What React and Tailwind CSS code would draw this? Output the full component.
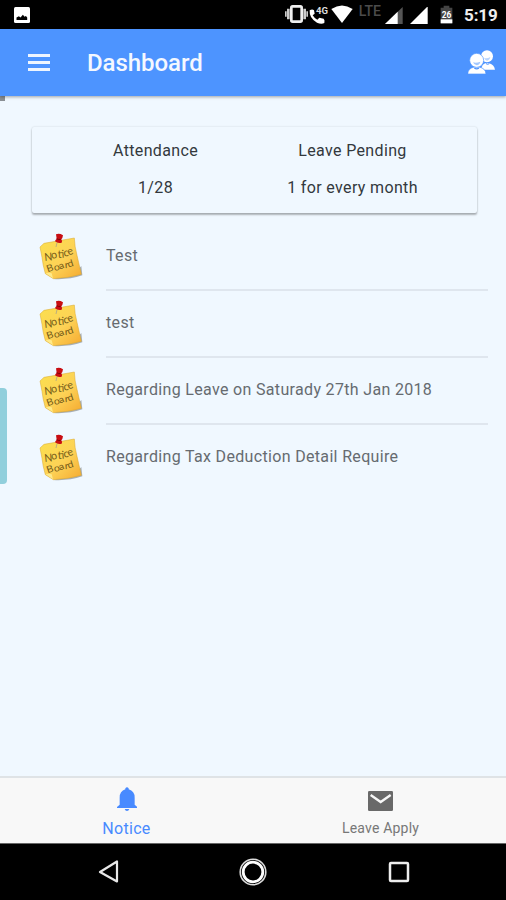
import React from 'react';

const notices = [
  'Test',
  'test',
  'Regarding Leave on Saturady 27th Jan 2018',
  'Regarding Tax Deduction Detail Require',
];

function StatusBar() {
  return (
    <div className="flex h-[29px] shrink-0 items-start bg-black pl-[14px] pr-[8px] pt-[5px] text-white">
      <svg className="mt-[2px] h-4 w-4" viewBox="0 0 16 16">
        <rect width="16" height="16" rx="1.5" fill="#fff" />
        <path d="M2.5 13V10.6l2.4-1.4 1.6 1.2 2.4-2.6 1.6 2 1.4-.8 1.3 1.6V13z" fill="#000" />
      </svg>
      <svg className="ml-auto h-[18px] w-[23px]" viewBox="92 17 69 54" fill="#ccc">
        <path d="M92 36h5v16h-5zM98 28h8v32h-8zM147 28h8v32h-8zM156 36h5v16h-5z" />
        <rect x="111" y="21" width="31" height="46" rx="4" fill="none" stroke="#eee" strokeWidth="8" />
      </svg>
      <svg className="ml-[1px] h-5 w-5" viewBox="165 16 60 60">
        <path d="M167 32q8-5 13 0l2 10-6 5q5 9 14 13l6-6 13 3q4 4 2 13-9 5-22-1-24-13-22-37z" fill="#fff" />
        <text x="186" y="44" fontSize="29" fontWeight="700" fontFamily="Roboto" textLength="36" lengthAdjust="spacingAndGlyphs" fill="#ddd">4G</text>
      </svg>
      <svg className="ml-[2px] h-[18px] w-[22px]" viewBox="231 16 66 54" fill="#fff">
        <path d="M232 28q32-21 64 0l-32 42z" />
      </svg>
      <span className="ml-[6px] mt-[-1px] font-['Roboto'] text-[14px] leading-[14px] font-medium text-[#4b4b4b]">LTE</span>
      <svg className="ml-[4px] mt-[2px] h-[18px] w-[18px]" viewBox="397 22 54 54">
        <path d="M397 73 450 22v51z" fill="#555" />
        <path d="M397 73 435 36v37z" fill="#fff" />
      </svg>
      <svg className="ml-[7px] mt-[2px] h-[18px] w-[18px]" viewBox="472 22 54 54">
        <path d="M472 73 525 20v53z" fill="#fff" />
      </svg>
      <svg className="ml-[12px] h-[19px] w-[13px]" viewBox="562 16 39 57">
        <path d="M573 18h17v6h9v47h-35V24h9z" fill="#444" />
        <path d="M564 59h35v12h-35z" fill="#fff" />
        <text x="567" y="55" fontSize="27" fontWeight="700" fontFamily="Roboto" textLength="29" lengthAdjust="spacingAndGlyphs" fill="#fff">26</text>
      </svg>
      <span className="ml-[11px] w-[34px] whitespace-nowrap font-['Roboto'] text-[17px] leading-5 font-bold tracking-[-0.1px] text-[#eee]">5:19</span>
    </div>
  );
}

function Header() {
  return (
    <header className="z-10 flex h-[67px] shrink-0 items-center bg-[#4d94ff] pl-[28px] pr-[11px] text-white shadow-[0_1px_3px_rgba(0,0,0,0.35)]">
      <div className="flex w-[22px] flex-col gap-[4px]">
        <span className="h-[3px] bg-[#eef5ff]" />
        <span className="h-[3px] bg-[#eef5ff]" />
        <span className="h-[3px] bg-[#eef5ff]" />
      </div>
      <h1 className="ml-[37px] font-['Roboto'] text-[24px] font-medium tracking-[-0.05px] text-[#f4f8ff]">Dashboard</h1>
      <svg className="ml-auto mt-[-2px] h-6 w-[27px]" viewBox="644 147 81 72">
        <g fill="#fff">
          <path d="M683 206q3-16 13-19h12q14 4 17 19z" />
          <circle cx="701" cy="166" r="18" />
        </g>
        <path d="M692 171q9 3 19-3-2 10-10 11-6-1-9-8z" fill="#b9d5ff" />
        <path d="M698 188q5 4 10 0" fill="none" stroke="#4d94ff" strokeWidth="3" />
        <g fill="#fff" stroke="#4d94ff" strokeWidth="2">
          <path d="M643 219q1-17 20-21h14q20 4 21 21z" />
          <circle cx="670" cy="178" r="21" />
        </g>
        <path d="M659 184q10 3 22-2-2 10-11 11-8-1-11-9z" fill="#a3c8ff" />
        <path d="M663 201q7 5 14 0" fill="none" stroke="#4d94ff" strokeWidth="4" />
      </svg>
    </header>
  );
}

function NoteIcon() {
  return (
    <svg className="h-12 w-[45px] shrink-0" viewBox="117 24 135 144">
      <defs>
        <linearGradient id="note" x1="0" y1="0" x2="1" y2="1">
          <stop offset="0" stopColor="#fbe04e" />
          <stop offset="0.55" stopColor="#fdd256" />
          <stop offset="1" stopColor="#f5aa31" />
        </linearGradient>
      </defs>
      <path d="M160 162q45 3 87-11l-3-28-20 20z" fill="#8f969e" opacity="0.75" />
      <path d="M120 66 132 55 223 39q1 26 8 52l13 57q-38 11-84 13l-24-15q-8-28-10-49z" fill="url(#note)" stroke="#d9a72c" strokeWidth="1.5" />
      <path d="M137 145q12-3 18 0l4 15z" fill="#ffea8a" />
      <g fontFamily="Lato, sans-serif" fill="#735a18">
        <text transform="translate(134 108) rotate(-13)" fontSize="33" textLength="91" lengthAdjust="spacingAndGlyphs" rotate="8 -6 10 -4 6 -8">Notice</text>
        <text transform="translate(143 142) rotate(-13)" fontSize="29" textLength="82" lengthAdjust="spacingAndGlyphs" rotate="-6 6 -8 8 -4">Board</text>
      </g>
      <path d="M171 53 168 66" stroke="#999" strokeWidth="2" />
      <path d="M168 28q10-4 21 3l-2 8-3 4q4 5 1 10-11 4-20-4 1-5 5-8z" fill="#c80d12" />
      <path d="M170 41q6 4 12 2" stroke="#790509" strokeWidth="3" fill="none" />
    </svg>
  );
}

function SummaryCard() {
  return (
    <section className="ml-[32px] mr-[29px] mt-[31px] grid h-[86px] grid-cols-2 rounded-[2px] bg-[#f0f8ff] pl-[25px] pr-[26px] pt-[12px] text-center text-[16px] leading-6 tracking-[0.35px] text-[#33383d] shadow-[0_2px_2px_rgba(0,0,0,0.28),0_0_2px_rgba(0,0,0,0.16)]">
      <div>
        <p>Attendance</p>
        <p className="mt-[13px]">1/28</p>
      </div>
      <div>
        <p>Leave Pending</p>
        <p className="mt-[13px]">1 for every month</p>
      </div>
    </section>
  );
}

function TabBar() {
  return (
    <nav className="grid h-[67px] shrink-0 grid-cols-2 border-t-2 border-[#dfe3e6] bg-[#f8f8f8] text-center">
      <div className="flex flex-col items-center text-[#488aff]">
        <svg className="mt-[9px] h-6 w-5" viewBox="351 67 60 72" fill="currentColor">
          <path d="M376 74v-3q5-6 10 0v3q18 5 18 25v21l8 7v3h-61v-3l8-7V99q0-20 17-25zM374 133h14q-2 6-7 6t-7-6z" />
        </svg>
        <span className="mt-[8px] text-[16px] leading-5 tracking-[0.3px]">Notice</span>
      </div>
      <div className="flex flex-col items-center text-[#696969]">
        <svg className="ml-px mt-[13px] h-5 w-[25px]" viewBox="345 78 75 60">
          <rect x="345" y="78" width="75" height="60" rx="4" fill="currentColor" />
          <path d="m353 90 30 21 30-21" fill="none" stroke="#f8f8f8" strokeWidth="7" />
        </svg>
        <span className="ml-[2px] mt-[7px] text-[14px] leading-5 tracking-[0.2px] text-[#777]">Leave Apply</span>
      </div>
    </nav>
  );
}

function AndroidNav() {
  return (
    <div className="grid h-[57px] shrink-0 grid-cols-[1fr_28px_1fr] items-center border-t border-[#666] bg-black">
      <svg className="ml-[98px] h-6 w-[22px]" viewBox="0 0 22 24">
        <path d="M19 1.5v20L2 12z" fill="none" stroke="#e8e8e8" strokeWidth="2.2" strokeLinejoin="round" />
      </svg>
      <svg className="h-7 w-7" viewBox="0 0 28 28" fill="none">
        <circle cx="14" cy="14" r="12.8" stroke="#ddd" strokeWidth="1.6" />
        <circle cx="14" cy="14" r="9.8" stroke="#fff" strokeWidth="2.8" />
      </svg>
      <svg className="ml-auto mr-[96px] h-[22px] w-[22px]" viewBox="0 0 22 22">
        <rect x="2" y="2" width="18" height="18" rx="1" fill="none" stroke="#eee" strokeWidth="2.5" />
      </svg>
    </div>
  );
}

export default function App() {
  return (
    <div className="flex h-[900px] w-[506px] flex-col overflow-hidden bg-[#f0f8ff] font-['Roboto',sans-serif]">
      <StatusBar />
      <Header />
      <main className="relative flex-1">
        <div className="absolute left-0 top-0 h-[5px] w-[5px] bg-[#8b9095]" />
        <div className="absolute left-0 top-[292px] h-[96px] w-[7px] rounded-r-[4px] bg-[#91cfdc]" />
        <div className="flow-root">
          <SummaryCard />
        </div>
        <ul className="mt-[11px] pl-[39px] pr-[18px]">
          {notices.map((text, i) => (
            <li key={i} className="flex h-[67px]">
              <div className="pt-[9px]"><NoteIcon /></div>
              <div className={`ml-[22px] flex flex-1 items-center border-b-2 pb-px text-[16px] tracking-[0.33px] text-[#666b70] ${i < notices.length - 1 ? 'border-[#dfe6ee]' : 'border-transparent'}`}>
                {text}
              </div>
            </li>
          ))}
        </ul>
      </main>
      <TabBar />
      <AndroidNav />
    </div>
  );
}
